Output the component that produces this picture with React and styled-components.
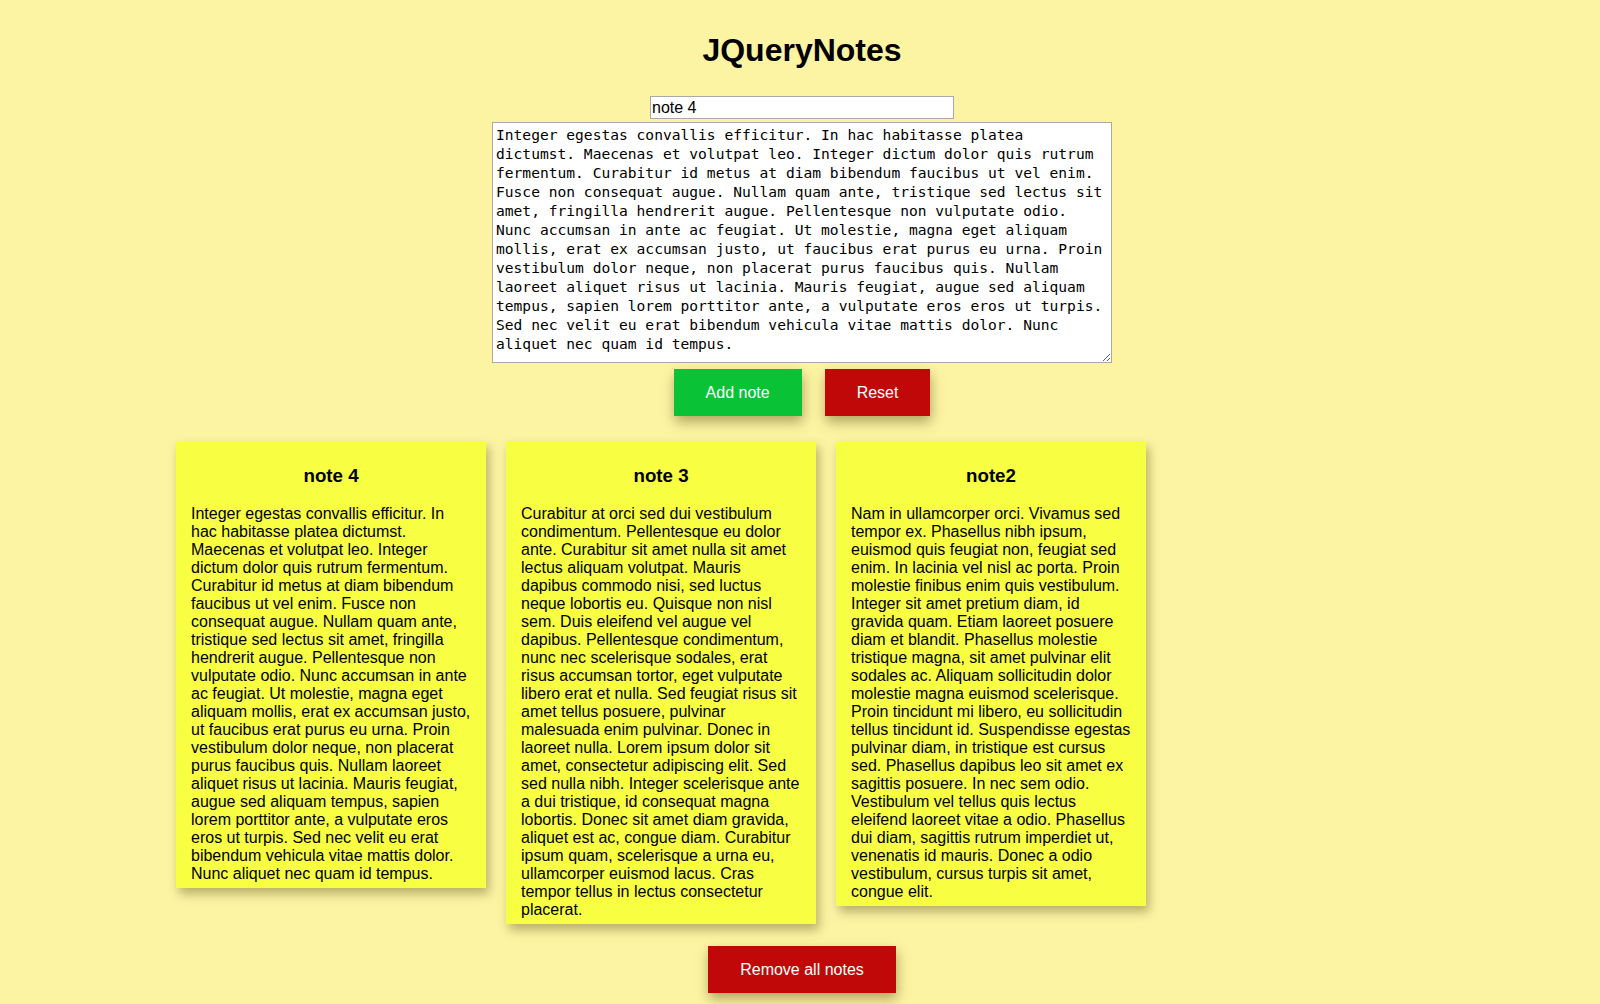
import React, { useState } from "react";
import styled, { createGlobalStyle } from "styled-components";

const GlobalStyle = createGlobalStyle`
  html, body {
    margin: 0;
    padding: 0;
    background: #fdf4a3;
  }
  body {
    font-family: "Liberation Sans", Arial, sans-serif;
    color: #000;
  }
`;

const Page = styled.div`
  min-height: 1004px;
  padding: 32px 0 0 4px;
  box-sizing: border-box;
`;

const Title = styled.h1`
  margin: 0;
  font-size: 32px;
  line-height: 37px;
  font-weight: bold;
  text-align: center;
`;

const Form = styled.form`
  display: flex;
  flex-direction: column;
  align-items: center;
  margin-top: 27px;
`;

const TitleInput = styled.input`
  box-sizing: border-box;
  width: 304px;
  height: 23px;
  padding: 1px;
  border: 1px solid #a9a9a9;
  background: #fff;
  font-family: "Liberation Sans", Arial, sans-serif;
  font-size: 16px;
  color: #000;
  outline: none;
`;

const BodyInput = styled.textarea`
  box-sizing: border-box;
  width: 620px;
  height: 241px;
  margin-top: 3px;
  padding: 2px 2px 2px 3px;
  border: 1px solid #a9a9a9;
  background: #fff;
  font-family: "DejaVu Sans Mono", "Liberation Mono", monospace;
  font-size: 14.6px;
  line-height: 19px;
  color: #000;
  outline: none;
  overflow: hidden;
`;

const ButtonRow = styled.div`
  display: flex;
  justify-content: center;
  gap: 23px;
  margin-top: 6px;
`;

const Button = styled.button`
  box-sizing: border-box;
  height: 47px;
  padding: 0 ${(p) => p.$padX || 32}px;
  border: none;
  background: ${(p) => (p.$tone === "green" ? "#09c236" : "#c10808")};
  color: #fff;
  font-family: "Liberation Sans", Arial, sans-serif;
  font-size: 16px;
  line-height: 19px;
  cursor: pointer;
  box-shadow: 1px 6px 12px rgba(60, 50, 0, 0.4);
`;

const Board = styled.div`
  display: flex;
  flex-wrap: wrap;
  align-items: flex-start;
  gap: 20px;
  width: 1252px;
  margin: 25px auto 0;
`;

const Card = styled.div`
  box-sizing: border-box;
  width: 310px;
  padding: 5px 15px;
  background: #f8fe42;
  box-shadow: 3px 6px 10px rgba(60, 50, 0, 0.35);
`;

const CardTitle = styled.h3`
  margin: 18.72px 0;
  font-size: 18.72px;
  line-height: 21.5px;
  font-weight: bold;
  text-align: center;
`;

const CardText = styled.div`
  font-size: 16px;
  line-height: 18px;
`;

const Footer = styled.div`
  display: flex;
  justify-content: center;
  margin-top: 22px;
`;

const textareaValue = [
  "Integer egestas convallis efficitur. In hac habitasse platea",
  "dictumst. Maecenas et volutpat leo. Integer dictum dolor quis rutrum",
  "fermentum. Curabitur id metus at diam bibendum faucibus ut vel enim.",
  "Fusce non consequat augue. Nullam quam ante, tristique sed lectus sit",
  "amet, fringilla hendrerit augue. Pellentesque non vulputate odio.",
  "Nunc accumsan in ante ac feugiat. Ut molestie, magna eget aliquam",
  "mollis, erat ex accumsan justo, ut faucibus erat purus eu urna. Proin",
  "vestibulum dolor neque, non placerat purus faucibus quis. Nullam",
  "laoreet aliquet risus ut lacinia. Mauris feugiat, augue sed aliquam",
  "tempus, sapien lorem porttitor ante, a vulputate eros eros ut turpis.",
  "Sed nec velit eu erat bibendum vehicula vitae mattis dolor. Nunc",
  "aliquet nec quam id tempus.",
].join("\n");

const notes = [
  {
    title: "note 4",
    text:
      "Integer egestas convallis efficitur. In hac habitasse platea dictumst. Maecenas et volutpat leo. Integer dictum dolor quis rutrum fermentum. Curabitur id metus at diam bibendum faucibus ut vel enim. Fusce non consequat augue. Nullam quam ante, tristique sed lectus sit amet, fringilla hendrerit augue. Pellentesque non vulputate odio. Nunc accumsan in ante ac feugiat. Ut molestie, magna eget aliquam mollis, erat ex accumsan justo, ut faucibus erat purus eu urna. Proin vestibulum dolor neque, non placerat purus faucibus quis. Nullam laoreet aliquet risus ut lacinia. Mauris feugiat, augue sed aliquam tempus, sapien lorem porttitor ante, a vulputate eros eros ut turpis. Sed nec velit eu erat bibendum vehicula vitae mattis dolor. Nunc aliquet nec quam id tempus.",
  },
  {
    title: "note 3",
    text:
      "Curabitur at orci sed dui vestibulum condimentum. Pellentesque eu dolor ante. Curabitur sit amet nulla sit amet lectus aliquam volutpat. Mauris dapibus commodo nisi, sed luctus neque lobortis eu. Quisque non nisl sem. Duis eleifend vel augue vel dapibus. Pellentesque condimentum, nunc nec scelerisque sodales, erat risus accumsan tortor, eget vulputate libero erat et nulla. Sed feugiat risus sit amet tellus posuere, pulvinar malesuada enim pulvinar. Donec in laoreet nulla. Lorem ipsum dolor sit amet, consectetur adipiscing elit. Sed sed nulla nibh. Integer scelerisque ante a dui tristique, id consequat magna lobortis. Donec sit amet diam gravida, aliquet est ac, congue diam. Curabitur ipsum quam, scelerisque a urna eu, ullamcorper euismod lacus. Cras tempor tellus in lectus consectetur placerat.",
  },
  {
    title: "note2",
    text:
      "Nam in ullamcorper orci. Vivamus sed tempor ex. Phasellus nibh ipsum, euismod quis feugiat non, feugiat sed enim. In lacinia vel nisl ac porta. Proin molestie finibus enim quis vestibulum. Integer sit amet pretium diam, id gravida quam. Etiam laoreet posuere diam et blandit. Phasellus molestie tristique magna, sit amet pulvinar elit sodales ac. Aliquam sollicitudin dolor molestie magna euismod scelerisque. Proin tincidunt mi libero, eu sollicitudin tellus tincidunt id. Suspendisse egestas pulvinar diam, in tristique est cursus sed. Phasellus dapibus leo sit amet ex sagittis posuere. In nec sem odio. Vestibulum vel tellus quis lectus eleifend laoreet vitae a odio. Phasellus dui diam, sagittis rutrum imperdiet ut, venenatis id mauris. Donec a odio vestibulum, cursus turpis sit amet, congue elit.",
  },
];

export default function App() {
  const [title, setTitle] = useState("note 4");
  const [body, setBody] = useState(textareaValue);

  return (
    <>
      <GlobalStyle />
      <Page>
        <Title>JQueryNotes</Title>
        <Form onSubmit={(e) => e.preventDefault()}>
          <TitleInput
            type="text"
            value={title}
            onChange={(e) => setTitle(e.target.value)}
          />
          <BodyInput value={body} onChange={(e) => setBody(e.target.value)} />
          <ButtonRow>
            <Button type="submit" $tone="green">
              Add note
            </Button>
            <Button type="reset" $tone="red">
              Reset
            </Button>
          </ButtonRow>
        </Form>
        <Board>
          {notes.map((n) => (
            <Card key={n.title}>
              <CardTitle>{n.title}</CardTitle>
              <CardText>{n.text}</CardText>
            </Card>
          ))}
        </Board>
        <Footer>
          <Button type="button" $tone="red" $padX={32}>
            Remove all notes
          </Button>
        </Footer>
      </Page>
    </>
  );
}
